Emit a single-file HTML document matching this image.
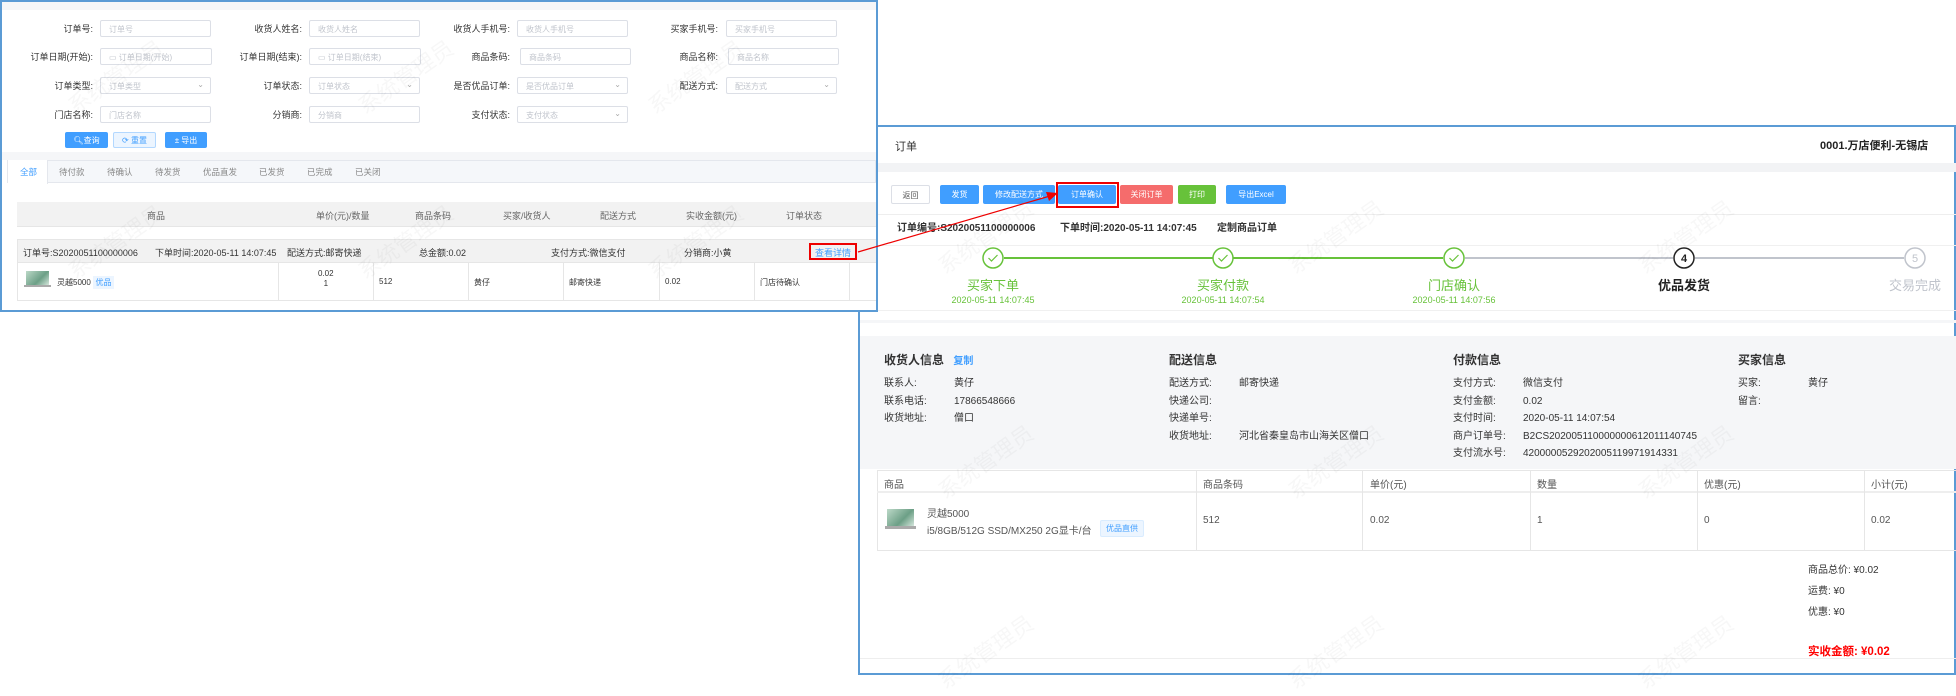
<!DOCTYPE html>
<html><head><meta charset="utf-8"><style>
*{margin:0;padding:0;box-sizing:border-box}
body{width:1956px;height:675px;background:#fff;position:relative;overflow:hidden;font-family:"Liberation Sans","Noto Sans CJK SC",sans-serif;color:#333}
.a{position:absolute;white-space:nowrap}
.l{font-size:9px;color:#333}
.in{position:absolute;height:17px;border:1px solid #dcdfe6;border-radius:2px;background:#fff;font-size:8px;color:#c0c4cc;padding:3px 0 0 8px}
.in i{position:absolute;right:6px;top:2px;font-style:normal;color:#aaa}
.btn{position:absolute;font-size:8px;color:#fff;text-align:center;border-radius:2px}
.r{font-size:11px;color:#333}
.g{color:#67c23a}
.wm{position:absolute;color:rgba(0,0,0,0.03);font-size:22px;transform:rotate(-35deg);white-space:nowrap}
</style></head><body>

<!-- RIGHT PANEL -->
<div class="a" style="left:858px;top:125px;width:1098px;height:550px;border:2px solid #5b9bd5;background:#fff"></div>
<div class="a" style="left:860px;top:163px;width:1096px;height:9px;background:#f2f3f5"></div>
<div class="a r" style="left:895px;top:138px">订单</div>
<div class="a" style="left:1820px;top:137px;font-size:11px;font-weight:bold;color:#222">0001.万店便利-无锡店</div>

<div class="btn" style="left:891px;top:185px;width:39px;height:19px;border:1px solid #dcdfe6;color:#555;padding-top:4px">返回</div>
<div class="btn" style="left:940px;top:185px;width:39px;height:19px;background:#409eff;padding-top:4px">发货</div>
<div class="btn" style="left:983px;top:185px;width:72px;height:19px;background:#409eff;padding-top:4px">修改配送方式</div>
<div class="btn" style="left:1058px;top:185px;width:58px;height:19px;background:#409eff;padding-top:4px">订单确认</div>
<div class="a" style="left:1056px;top:182px;width:63px;height:26px;border:2px solid #e00"></div>
<div class="btn" style="left:1120px;top:185px;width:53px;height:19px;background:#f56c6c;padding-top:4px">关闭订单</div>
<div class="btn" style="left:1178px;top:185px;width:38px;height:19px;background:#67c23a;padding-top:4px">打印</div>
<div class="btn" style="left:1226px;top:185px;width:60px;height:19px;background:#409eff;padding-top:4px">导出Excel</div>

<div class="a" style="left:860px;top:214px;width:1096px;height:1px;background:#eee"></div>
<div class="a" style="left:897px;top:219px;font-size:10px;font-weight:bold">订单编号:S2020051100000006</div>
<div class="a" style="left:1060px;top:219px;font-size:10px;font-weight:bold">下单时间:2020-05-11 14:07:45</div>
<div class="a" style="left:1217px;top:219px;font-size:10px;font-weight:bold">定制商品订单</div>
<div class="a" style="left:860px;top:245px;width:1096px;height:1px;background:#f0f0f0"></div>

<!-- steps -->
<div class="a" style="left:1004px;top:257px;width:439px;height:2px;background:#67c23a"></div>
<div class="a" style="left:1465px;top:257px;width:208px;height:2px;background:#c0c4cc"></div>
<div class="a" style="left:1695px;top:257px;width:209px;height:2px;background:#c0c4cc"></div>
<svg class="a" style="left:982px;top:247px" width="22" height="22"><circle cx="11" cy="11" r="10" fill="#fff" stroke="#67c23a" stroke-width="1.5"/><path d="M6.5 11l3 3 6-6" fill="none" stroke="#67c23a" stroke-width="1.2"/></svg>
<svg class="a" style="left:1212px;top:247px" width="22" height="22"><circle cx="11" cy="11" r="10" fill="#fff" stroke="#67c23a" stroke-width="1.5"/><path d="M6.5 11l3 3 6-6" fill="none" stroke="#67c23a" stroke-width="1.2"/></svg>
<svg class="a" style="left:1443px;top:247px" width="22" height="22"><circle cx="11" cy="11" r="10" fill="#fff" stroke="#67c23a" stroke-width="1.5"/><path d="M6.5 11l3 3 6-6" fill="none" stroke="#67c23a" stroke-width="1.2"/></svg>
<svg class="a" style="left:1673px;top:247px" width="22" height="22"><circle cx="11" cy="11" r="10" fill="#fff" stroke="#222" stroke-width="1.5"/><text x="11" y="15" text-anchor="middle" font-size="11" font-weight="bold" fill="#222" font-family="Liberation Sans">4</text></svg>
<svg class="a" style="left:1904px;top:247px" width="22" height="22"><circle cx="11" cy="11" r="10" fill="#fff" stroke="#c0c4cc" stroke-width="1.5"/><text x="11" y="15" text-anchor="middle" font-size="11" fill="#c0c4cc" font-family="Liberation Sans">5</text></svg>
<div class="a g" style="left:943px;top:275px;width:100px;text-align:center;font-size:13px">买家下单</div>
<div class="a g" style="left:1173px;top:275px;width:100px;text-align:center;font-size:13px">买家付款</div>
<div class="a g" style="left:1404px;top:275px;width:100px;text-align:center;font-size:13px">门店确认</div>
<div class="a" style="left:1634px;top:275px;width:100px;text-align:center;font-size:13px;font-weight:bold;color:#222">优品发货</div>
<div class="a" style="left:1865px;top:275px;width:100px;text-align:center;font-size:13px;color:#c0c4cc">交易完成</div>
<div class="a g" style="left:943px;top:295px;width:100px;text-align:center;font-size:9px">2020-05-11 14:07:45</div>
<div class="a g" style="left:1173px;top:295px;width:100px;text-align:center;font-size:9px">2020-05-11 14:07:54</div>
<div class="a g" style="left:1404px;top:295px;width:100px;text-align:center;font-size:9px">2020-05-11 14:07:56</div>
<div class="a" style="left:860px;top:310px;width:1096px;height:1px;background:#f0f0f0"></div>
<div class="a" style="left:860px;top:320px;width:1096px;height:3px;background:#f5f6f8"></div>

<!-- info -->
<div class="a" style="left:860px;top:336px;width:1096px;height:133px;background:#f5f6f8"></div>
<div class="a" style="left:884px;top:351px;font-size:12px;font-weight:bold">收货人信息 <span style="color:#409eff;font-size:10px;margin-left:6px">复制</span></div>
<div class="a" style="left:1169px;top:351px;font-size:12px;font-weight:bold">配送信息</div>
<div class="a" style="left:1453px;top:351px;font-size:12px;font-weight:bold">付款信息</div>
<div class="a" style="left:1738px;top:351px;font-size:12px;font-weight:bold">买家信息</div>
<div class="a" style="left:884px;top:375px;font-size:10px;line-height:17.5px">联系人:<br>联系电话:<br>收货地址:</div>
<div class="a" style="left:954px;top:375px;font-size:10px;line-height:17.5px">黄仔<br>17866548666<br>僧口</div>
<div class="a" style="left:1169px;top:375px;font-size:10px;line-height:17.5px">配送方式:<br>快递公司:<br>快递单号:<br>收货地址:</div>
<div class="a" style="left:1239px;top:375px;font-size:10px;line-height:17.5px">邮寄快递<br><br><br>河北省秦皇岛市山海关区僧口</div>
<div class="a" style="left:1453px;top:375px;font-size:10px;line-height:17.5px">支付方式:<br>支付金额:<br>支付时间:<br>商户订单号:<br>支付流水号:</div>
<div class="a" style="left:1523px;top:375px;font-size:10px;line-height:17.5px">微信支付<br>0.02<br>2020-05-11 14:07:54<br>B2CS202005110000000612011140745<br>4200000529202005119971914331</div>
<div class="a" style="left:1738px;top:375px;font-size:10px;line-height:17.5px">买家:<br>留言:</div>
<div class="a" style="left:1808px;top:375px;font-size:10px;line-height:17.5px">黄仔</div>

<!-- product table -->
<div class="a" style="left:877px;top:470px;width:1079px;height:81px;border:1px solid #e6e6e6;border-right:none"></div>
<div class="a" style="left:877px;top:491px;width:1079px;height:2px;background:#eee"></div>
<div class="a" style="left:1196px;top:470px;width:1px;height:81px;background:#e6e6e6"></div>
<div class="a" style="left:1362px;top:470px;width:1px;height:81px;background:#e6e6e6"></div>
<div class="a" style="left:1530px;top:470px;width:1px;height:81px;background:#e6e6e6"></div>
<div class="a" style="left:1697px;top:470px;width:1px;height:81px;background:#e6e6e6"></div>
<div class="a" style="left:1864px;top:470px;width:1px;height:81px;background:#e6e6e6"></div>
<div class="a" style="left:884px;top:476px;font-size:10px;color:#555">商品</div>
<div class="a" style="left:1203px;top:476px;font-size:10px;color:#555">商品条码</div>
<div class="a" style="left:1370px;top:476px;font-size:10px;color:#555">单价(元)</div>
<div class="a" style="left:1537px;top:476px;font-size:10px;color:#555">数量</div>
<div class="a" style="left:1704px;top:476px;font-size:10px;color:#555">优惠(元)</div>
<div class="a" style="left:1871px;top:476px;font-size:10px;color:#555">小计(元)</div>
<div class="a" style="left:887px;top:509px;width:27px;height:17px;background:linear-gradient(135deg,#bcd9c8,#6c9f86 60%,#d5e6dc)"></div>
<div class="a" style="left:885px;top:526px;width:31px;height:3px;background:#aaa"></div>
<div class="a" style="left:927px;top:505px;font-size:10px;color:#555">灵越5000</div>
<div class="a" style="left:927px;top:522px;font-size:10px;color:#555">i5/8GB/512G SSD/MX250 2G显卡/台</div>
<div class="a" style="left:1100px;top:520px;padding:2px 5px;background:#ecf5ff;border:1px solid #d9ecff;color:#409eff;font-size:8px;border-radius:2px">优品直供</div>
<div class="a" style="left:1203px;top:515px;font-size:10px;color:#555">512</div>
<div class="a" style="left:1370px;top:515px;font-size:10px;color:#555">0.02</div>
<div class="a" style="left:1537px;top:515px;font-size:10px;color:#555">1</div>
<div class="a" style="left:1704px;top:515px;font-size:10px;color:#555">0</div>
<div class="a" style="left:1871px;top:515px;font-size:10px;color:#555">0.02</div>
<div class="a" style="left:1808px;top:560px;font-size:10px;line-height:21px">商品总价: ¥0.02<br>运费: ¥0<br>优惠: ¥0</div>
<div class="a" style="left:1808px;top:643px;font-size:11.5px;font-weight:bold;color:#f00">实收金额: ¥0.02</div>
<div class="a" style="left:860px;top:658px;width:1096px;height:1px;background:#eee"></div>

<!-- LEFT PANEL -->
<div class="a" style="left:0;top:0;width:878px;height:312px;border:2px solid #5b9bd5;background:#fff"></div>
<div class="a" style="left:2px;top:2px;width:874px;height:8px;background:#f5f6f8"></div>
<div class="a l" style="left:0;top:22px;width:93px;text-align:right">订单号:</div>
<div class="a l" style="left:200px;top:22px;width:102px;text-align:right">收货人姓名:</div>
<div class="a l" style="left:400px;top:22px;width:110px;text-align:right">收货人手机号:</div>
<div class="a l" style="left:600px;top:22px;width:118px;text-align:right">买家手机号:</div>
<div class="in" style="left:100px;top:20px;width:111px">订单号</div>
<div class="in" style="left:309px;top:20px;width:111px">收货人姓名</div>
<div class="in" style="left:517px;top:20px;width:111px">收货人手机号</div>
<div class="in" style="left:726px;top:20px;width:111px">买家手机号</div>
<div class="a l" style="left:0;top:50px;width:93px;text-align:right">订单日期(开始):</div>
<div class="a l" style="left:200px;top:50px;width:102px;text-align:right">订单日期(结束):</div>
<div class="a l" style="left:400px;top:50px;width:110px;text-align:right">商品条码:</div>
<div class="a l" style="left:600px;top:50px;width:118px;text-align:right">商品名称:</div>
<div class="in" style="left:100px;top:48px;width:112px">▭ 订单日期(开始)</div>
<div class="in" style="left:309px;top:48px;width:112px">▭ 订单日期(结束)</div>
<div class="in" style="left:520px;top:48px;width:111px">商品条码</div>
<div class="in" style="left:728px;top:48px;width:111px">商品名称</div>
<div class="a l" style="left:0;top:79px;width:93px;text-align:right">订单类型:</div>
<div class="a l" style="left:200px;top:79px;width:102px;text-align:right">订单状态:</div>
<div class="a l" style="left:400px;top:79px;width:110px;text-align:right">是否优品订单:</div>
<div class="a l" style="left:600px;top:79px;width:118px;text-align:right">配送方式:</div>
<div class="in" style="left:100px;top:77px;width:111px">订单类型<i>⌄</i></div>
<div class="in" style="left:309px;top:77px;width:111px">订单状态<i>⌄</i></div>
<div class="in" style="left:517px;top:77px;width:111px">是否优品订单<i>⌄</i></div>
<div class="in" style="left:726px;top:77px;width:111px">配送方式<i>⌄</i></div>
<div class="a l" style="left:0;top:108px;width:93px;text-align:right">门店名称:</div>
<div class="a l" style="left:200px;top:108px;width:102px;text-align:right">分销商:</div>
<div class="a l" style="left:400px;top:108px;width:110px;text-align:right">支付状态:</div>
<div class="in" style="left:100px;top:106px;width:111px">门店名称</div>
<div class="in" style="left:309px;top:106px;width:111px">分销商</div>
<div class="in" style="left:517px;top:106px;width:111px">支付状态<i>⌄</i></div>
<div class="btn" style="left:65px;top:132px;width:43px;height:16px;background:#409eff;padding-top:3px">🔍︎查询</div>
<div class="btn" style="left:113px;top:132px;width:43px;height:16px;background:#ecf5ff;border:1px solid #b3d8ff;color:#409eff;padding-top:2px">⟳ 重置</div>
<div class="btn" style="left:165px;top:132px;width:42px;height:16px;background:#409eff;padding-top:3px">± 导出</div>
<div class="a" style="left:2px;top:152px;width:874px;height:8px;background:#f5f6f8"></div>
<div class="a" style="left:7px;top:160px;width:869px;height:23px;background:#f5f7fa;border:1px solid #e4e7ed"></div>
<div class="a" style="left:8px;top:160px;width:40px;height:24px;background:#fff;border-right:1px solid #e4e7ed"></div>
<div class="a" style="left:20px;top:166px;font-size:8.5px;color:#409eff">全部</div>
<div class="a" style="left:59px;top:166px;font-size:8.5px;color:#888">待付款</div>
<div class="a" style="left:107px;top:166px;font-size:8.5px;color:#888">待确认</div>
<div class="a" style="left:155px;top:166px;font-size:8.5px;color:#888">待发货</div>
<div class="a" style="left:203px;top:166px;font-size:8.5px;color:#888">优品直发</div>
<div class="a" style="left:259px;top:166px;font-size:8.5px;color:#888">已发货</div>
<div class="a" style="left:307px;top:166px;font-size:8.5px;color:#888">已完成</div>
<div class="a" style="left:355px;top:166px;font-size:8.5px;color:#888">已关闭</div>
<div class="a" style="left:17px;top:202px;width:859px;height:25px;background:#f2f2f2;border-bottom:1px solid #e6e6e6"></div>
<div class="a l" style="left:147px;top:209px;color:#666">商品</div>
<div class="a l" style="left:316px;top:209px;color:#666">单价(元)/数量</div>
<div class="a l" style="left:415px;top:209px;color:#666">商品条码</div>
<div class="a l" style="left:503px;top:209px;color:#666">买家/收货人</div>
<div class="a l" style="left:600px;top:209px;color:#666">配送方式</div>
<div class="a l" style="left:686px;top:209px;color:#666">实收金额(元)</div>
<div class="a l" style="left:786px;top:209px;color:#666">订单状态</div>
<div class="a" style="left:17px;top:239px;width:859px;height:62px;border:1px solid #e6e6e6;border-right:none"></div>
<div class="a" style="left:18px;top:240px;width:858px;height:23px;background:#f2f2f2;border-bottom:1px solid #e6e6e6"></div>
<div class="a l" style="left:23px;top:246px">订单号:S2020051100000006</div>
<div class="a l" style="left:155px;top:246px">下单时间:2020-05-11 14:07:45</div>
<div class="a l" style="left:287px;top:246px">配送方式:邮寄快递</div>
<div class="a l" style="left:419px;top:246px">总金额:0.02</div>
<div class="a l" style="left:551px;top:246px">支付方式:微信支付</div>
<div class="a l" style="left:684px;top:246px">分销商:小黄</div>
<div class="a" style="left:809px;top:243px;width:48px;height:17px;border:2px solid #e00;font-size:9px;color:#409eff;text-align:center;padding-top:1px">查看详情</div>
<div class="a" style="left:278px;top:263px;width:1px;height:38px;background:#e6e6e6"></div>
<div class="a" style="left:373px;top:263px;width:1px;height:38px;background:#e6e6e6"></div>
<div class="a" style="left:468px;top:263px;width:1px;height:38px;background:#e6e6e6"></div>
<div class="a" style="left:563px;top:263px;width:1px;height:38px;background:#e6e6e6"></div>
<div class="a" style="left:659px;top:263px;width:1px;height:38px;background:#e6e6e6"></div>
<div class="a" style="left:754px;top:263px;width:1px;height:38px;background:#e6e6e6"></div>
<div class="a" style="left:849px;top:263px;width:1px;height:38px;background:#e6e6e6"></div>
<div class="a" style="left:26px;top:271px;width:23px;height:14px;background:linear-gradient(135deg,#bcd9c8,#6c9f86 60%,#d5e6dc)"></div>
<div class="a" style="left:24px;top:285px;width:27px;height:2px;background:#aaa"></div>
<div class="a" style="left:57px;top:277px;font-size:8px">灵越5000</div>
<div class="a" style="left:93px;top:276px;width:21px;height:13px;background:#ecf5ff;color:#409eff;font-size:8px;text-align:center;padding-top:1px">优品</div>
<div class="a l" style="left:318px;top:269px;text-align:center;line-height:10px;font-size:8px">0.02<br>1</div>
<div class="a l" style="left:379px;top:277px;font-size:8px">512</div>
<div class="a l" style="left:474px;top:277px;font-size:8px">黄仔</div>
<div class="a l" style="left:569px;top:277px;font-size:8px">邮寄快递</div>
<div class="a l" style="left:665px;top:277px;font-size:8px">0.02</div>
<div class="a l" style="left:760px;top:277px;font-size:8px">门店待确认</div>

<!-- watermarks -->
<div class="wm" style="left:60px;top:60px">系统管理员</div>
<div class="wm" style="left:350px;top:60px">系统管理员</div>
<div class="wm" style="left:640px;top:60px">系统管理员</div>
<div class="wm" style="left:60px;top:225px">系统管理员</div>
<div class="wm" style="left:350px;top:225px">系统管理员</div>
<div class="wm" style="left:640px;top:225px">系统管理员</div>
<div class="wm" style="left:930px;top:220px">系统管理员</div>
<div class="wm" style="left:1280px;top:220px">系统管理员</div>
<div class="wm" style="left:1630px;top:220px">系统管理员</div>
<div class="wm" style="left:930px;top:445px">系统管理员</div>
<div class="wm" style="left:1280px;top:445px">系统管理员</div>
<div class="wm" style="left:1630px;top:445px">系统管理员</div>
<div class="wm" style="left:930px;top:635px">系统管理员</div>
<div class="wm" style="left:1280px;top:635px">系统管理员</div>
<div class="wm" style="left:1630px;top:635px">系统管理员</div>

<!-- red arrow -->
<svg class="a" style="left:0;top:0" width="1956" height="675"><line x1="858" y1="252" x2="1050" y2="196" stroke="#e00" stroke-width="1.2"/><path d="M1058 193 L1046 192 L1049 201 Z" fill="#e00"/></svg>
</body></html>
